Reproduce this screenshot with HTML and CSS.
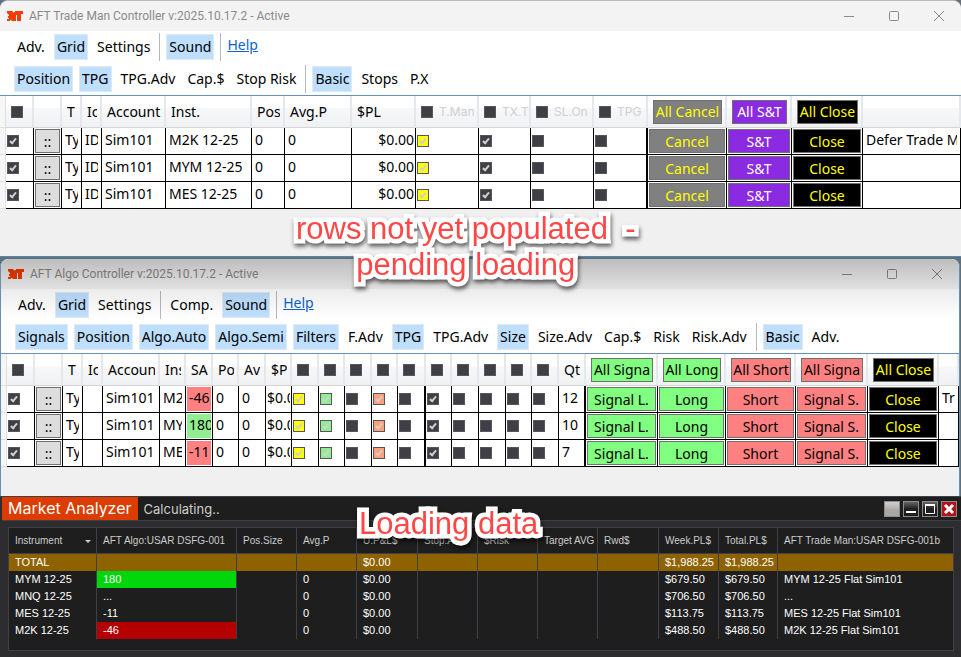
FILE: index.html
```html
<!DOCTYPE html>
<html lang="en">

<head>
    <meta charset="UTF-8">
    <meta name="viewport" content="width=device-width, initial-scale=1.0">
    <title>AFT Controllers</title>

    <link rel="stylesheet" href="styles.css">
</head>

<body>
    <!-- Trade Man -->
    <section class="window trade">
        <header class="titlebar">
            <svg class="logo" viewBox="0 0 16 10"><path d="M0 0H5L7 2V1H8V0H16V3H14V10H10V4H9V10H5L4 9H3V10H0V8H2V7H1V5H2V4L0 2Z" /></svg>
            <h1>AFT Trade Man Controller v:2025.10.17.2 - Active</h1>
            <div class="controls">
                <button aria-label="Minimize"><svg viewBox="0 0 10 10"><path d="M0 5.500H10" /></svg></button>
                <button aria-label="Maximize"><svg viewBox="0 0 10 10"><rect x=".5" y=".5" width="9" height="9" rx="1" /></svg></button>
                <button aria-label="Close window"><svg viewBox="0 0 10 10"><path d="M0 0L10 10M10 0L0 10" /></svg></button>
            </div>
        </header>
        <nav class="toolbar">
            <div class="tools">
                <button>Adv.</button>
                <button class="on">Grid</button>
                <button>Settings</button>
                <i class="sep"></i>
                <button class="on">Sound</button>
                <i class="sep"></i>
                <a href="#">Help</a>
            </div>
            <div class="tools">
                <button class="on">Position</button>
                <button class="on">TPG</button>
                <button>TPG.Adv</button>
                <button>Cap.$</button>
                <button>Stop Risk</button>
                <i class="sep"></i>
                <button class="on">Basic</button>
                <button>Stops</button>
                <button>P.X</button>
            </div>
        </nav>
        <table class="grid">
            <colgroup>
                <col style="width:6px"><col style="width:28px"><col style="width:28px"><col style="width:20px"><col style="width:20px">
                <col style="width:64px"><col style="width:86px"><col style="width:33px"><col style="width:67px"><col style="width:64px">
                <col style="width:63px"><col style="width:52px"><col style="width:63px"><col style="width:54px"><col style="width:79px">
                <col style="width:65px"><col style="width:71px"><col>
            </colgroup>
            <thead>
                <tr>
                    <th class="rowhead"></th>
                    <th><input type="checkbox" aria-label="All rows"></th>
                    <th></th>
                    <th><span>T</span></th>
                    <th><span>Ic</span></th>
                    <th><span>Account</span></th>
                    <th><span>Inst.</span></th>
                    <th><span>Pos</span></th>
                    <th><span>Avg.P</span></th>
                    <th><span>$PL</span></th>
                    <th><label><input type="checkbox">T.Man</label></th>
                    <th><label><input type="checkbox">TX.T</label></th>
                    <th><label><input type="checkbox">SL.On</label></th>
                    <th><label><input type="checkbox">TPG</label></th>
                    <th><button class="gray">All Cancel</button></th>
                    <th><button class="violet">All S&amp;T</button></th>
                    <th><button class="black">All Close</button></th>
                    <th></th>
                </tr>
            </thead>
            <tbody>
                <tr>
                    <td class="rowhead"></td>
                    <td><input type="checkbox" aria-label="Row" checked></td>
                    <td><button>::</button></td>
                    <td><span>Ty</span></td>
                    <td><span>ID</span></td>
                    <td><span>Sim101</span></td>
                    <td><span>M2K 12-25</span></td>
                    <td><span>0</span></td>
                    <td><span>0</span></td>
                    <td class="money"><span>$0.00</span></td>
                    <td><input class="yellow" type="checkbox" aria-label="T.Man" checked></td>
                    <td><input type="checkbox" aria-label="TX.T" checked></td>
                    <td><input type="checkbox" aria-label="SL.On"></td>
                    <td class="end"><input type="checkbox" aria-label="TPG"></td>
                    <td><button class="gray">Cancel</button></td>
                    <td><button class="violet">S&amp;T</button></td>
                    <td><button class="black">Close</button></td>
                    <td><span>Defer Trade Man</span></td>
                </tr>
                <tr>
                    <td class="rowhead"></td>
                    <td><input type="checkbox" aria-label="Row" checked></td>
                    <td><button>::</button></td>
                    <td><span>Ty</span></td>
                    <td><span>ID</span></td>
                    <td><span>Sim101</span></td>
                    <td><span>MYM 12-25</span></td>
                    <td><span>0</span></td>
                    <td><span>0</span></td>
                    <td class="money"><span>$0.00</span></td>
                    <td><input class="yellow" type="checkbox" aria-label="T.Man" checked></td>
                    <td><input type="checkbox" aria-label="TX.T" checked></td>
                    <td><input type="checkbox" aria-label="SL.On"></td>
                    <td class="end"><input type="checkbox" aria-label="TPG"></td>
                    <td><button class="gray">Cancel</button></td>
                    <td><button class="violet">S&amp;T</button></td>
                    <td><button class="black">Close</button></td>
                    <td></td>
                </tr>
                <tr>
                    <td class="rowhead"></td>
                    <td><input type="checkbox" aria-label="Row" checked></td>
                    <td><button>::</button></td>
                    <td><span>Ty</span></td>
                    <td><span>ID</span></td>
                    <td><span>Sim101</span></td>
                    <td><span>MES 12-25</span></td>
                    <td><span>0</span></td>
                    <td><span>0</span></td>
                    <td class="money"><span>$0.00</span></td>
                    <td><input class="yellow" type="checkbox" aria-label="T.Man" checked></td>
                    <td><input type="checkbox" aria-label="TX.T" checked></td>
                    <td><input type="checkbox" aria-label="SL.On"></td>
                    <td class="end"><input type="checkbox" aria-label="TPG"></td>
                    <td><button class="gray">Cancel</button></td>
                    <td><button class="violet">S&amp;T</button></td>
                    <td><button class="black">Close</button></td>
                    <td></td>
                </tr>
            </tbody>
        </table>
        <p class="note note-rows">rows not yet populated  -
pending loading</p>
    </section>

    <!-- Algo -->
    <section class="window algo">
        <header class="titlebar">
            <svg class="logo" viewBox="0 0 16 10"><path d="M0 0H5L7 2V1H8V0H16V3H14V10H10V4H9V10H5L4 9H3V10H0V8H2V7H1V5H2V4L0 2Z" /></svg>
            <h1>AFT Algo Controller v:2025.10.17.2 - Active</h1>
            <div class="controls">
                <button aria-label="Minimize"><svg viewBox="0 0 10 10"><path d="M0 5.500H10" /></svg></button>
                <button aria-label="Maximize"><svg viewBox="0 0 10 10"><rect x=".5" y=".5" width="9" height="9" rx="1" /></svg></button>
                <button aria-label="Close window"><svg viewBox="0 0 10 10"><path d="M0 0L10 10M10 0L0 10" /></svg></button>
            </div>
        </header>
        <nav class="toolbar">
            <div class="tools">
                <button>Adv.</button>
                <button class="on">Grid</button>
                <button>Settings</button>
                <i class="sep"></i>
                <button>Comp.</button>
                <button class="on">Sound</button>
                <i class="sep"></i>
                <a href="#">Help</a>
            </div>
            <div class="tools">
                <button class="on">Signals</button>
                <button class="on">Position</button>
                <button class="on">Algo.Auto</button>
                <button class="on">Algo.Semi</button>
                <button class="on">Filters</button>
                <button>F.Adv</button>
                <button class="on">TPG</button>
                <button>TPG.Adv</button>
                <button class="on">Size</button>
                <button>Size.Adv</button>
                <button>Cap.$</button>
                <button>Risk</button>
                <button>Risk.Adv</button>
                <i class="sep"></i>
                <button class="on">Basic</button>
                <button>Adv.</button>
            </div>
        </nav>
        <table class="grid">
            <colgroup>
                <col style="width:6px"><col style="width:28px"><col style="width:28px"><col style="width:20px"><col style="width:20px">
                <col style="width:57px"><col style="width:26px"><col style="width:27px"><col style="width:26px"><col style="width:27px">
                <col style="width:26px"><col style="width:27px"><col style="width:26px"><col style="width:27px"><col style="width:26px">
                <col style="width:28px"><col style="width:26px"><col style="width:27px"><col style="width:27px"><col style="width:26px">
                <col style="width:27px"><col style="width:27px"><col style="width:72px"><col style="width:68px"><col style="width:70px">
                <col style="width:72px"><col style="width:71px"><col>
            </colgroup>
            <thead>
                <tr>
                    <th class="rowhead"></th>
                    <th><input type="checkbox" aria-label="All rows"></th>
                    <th></th>
                    <th><span>T</span></th>
                    <th><span>Ic</span></th>
                    <th><span>Account</span></th>
                    <th><span>Ins</span></th>
                    <th><span>SA</span></th>
                    <th><span>Po</span></th>
                    <th><span>Av</span></th>
                    <th><span>$P</span></th>
                    <th><input type="checkbox" aria-label="Column 1"></th>
                    <th><input type="checkbox" aria-label="Column 2"></th>
                    <th><input type="checkbox" aria-label="Column 3"></th>
                    <th><input type="checkbox" aria-label="Column 4"></th>
                    <th><input type="checkbox" aria-label="Column 5"></th>
                    <th><input type="checkbox" aria-label="Column 6"></th>
                    <th><input type="checkbox" aria-label="Column 7"></th>
                    <th><input type="checkbox" aria-label="Column 8"></th>
                    <th><input type="checkbox" aria-label="Column 9"></th>
                    <th><input type="checkbox" aria-label="Column 10"></th>
                    <th><span>Qt</span></th>
                    <th><button class="green">All Signa</button></th>
                    <th><button class="green">All Long</button></th>
                    <th><button class="red">All Short</button></th>
                    <th><button class="red">All Signa</button></th>
                    <th><button class="black">All Close</button></th>
                    <th></th>
                </tr>
            </thead>
            <tbody>
                <tr>
                    <td class="rowhead"></td>
                    <td><input type="checkbox" aria-label="Row" checked></td>
                    <td><button>::</button></td>
                    <td><span>Ty</span></td>
                    <td></td>
                    <td><span>Sim101</span></td>
                    <td><span>M2</span></td>
                    <td><span class="signal down">-46</span></td>
                    <td><span>0</span></td>
                    <td><span>0</span></td>
                    <td class="pl"><span>$0.00</span></td>
                    <td><input class="yellow" type="checkbox" aria-label="Column 1" checked></td>
                    <td><input class="lime" type="checkbox" aria-label="Column 2" checked></td>
                    <td><input type="checkbox" aria-label="Column 3"></td>
                    <td><input class="salmon" type="checkbox" aria-label="Column 4" checked></td>
                    <td class="end"><input type="checkbox" aria-label="Column 5"></td>
                    <td><input type="checkbox" aria-label="Column 6" checked></td>
                    <td><input type="checkbox" aria-label="Column 7"></td>
                    <td><input type="checkbox" aria-label="Column 8"></td>
                    <td><input type="checkbox" aria-label="Column 9"></td>
                    <td><input type="checkbox" aria-label="Column 10"></td>
                    <td class="end"><span>12</span></td>
                    <td><button class="green">Signal L.</button></td>
                    <td><button class="green">Long</button></td>
                    <td><button class="red">Short</button></td>
                    <td><button class="red">Signal S.</button></td>
                    <td><button class="black">Close</button></td>
                    <td><span>Tra</span></td>
                </tr>
                <tr>
                    <td class="rowhead"></td>
                    <td><input type="checkbox" aria-label="Row" checked></td>
                    <td><button>::</button></td>
                    <td><span>Ty</span></td>
                    <td></td>
                    <td><span>Sim101</span></td>
                    <td><span>MY</span></td>
                    <td><span class="signal up">180</span></td>
                    <td><span>0</span></td>
                    <td><span>0</span></td>
                    <td class="pl"><span>$0.00</span></td>
                    <td><input class="yellow" type="checkbox" aria-label="Column 1" checked></td>
                    <td><input class="lime" type="checkbox" aria-label="Column 2" checked></td>
                    <td><input type="checkbox" aria-label="Column 3"></td>
                    <td><input class="salmon" type="checkbox" aria-label="Column 4" checked></td>
                    <td class="end"><input type="checkbox" aria-label="Column 5"></td>
                    <td><input type="checkbox" aria-label="Column 6" checked></td>
                    <td><input type="checkbox" aria-label="Column 7"></td>
                    <td><input type="checkbox" aria-label="Column 8"></td>
                    <td><input type="checkbox" aria-label="Column 9"></td>
                    <td><input type="checkbox" aria-label="Column 10"></td>
                    <td class="end"><span>10</span></td>
                    <td><button class="green">Signal L.</button></td>
                    <td><button class="green">Long</button></td>
                    <td><button class="red">Short</button></td>
                    <td><button class="red">Signal S.</button></td>
                    <td><button class="black">Close</button></td>
                    <td></td>
                </tr>
                <tr>
                    <td class="rowhead"></td>
                    <td><input type="checkbox" aria-label="Row" checked></td>
                    <td><button>::</button></td>
                    <td><span>Ty</span></td>
                    <td></td>
                    <td><span>Sim101</span></td>
                    <td><span>ME</span></td>
                    <td><span class="signal down">-11</span></td>
                    <td><span>0</span></td>
                    <td><span>0</span></td>
                    <td class="pl"><span>$0.00</span></td>
                    <td><input class="yellow" type="checkbox" aria-label="Column 1" checked></td>
                    <td><input class="lime" type="checkbox" aria-label="Column 2" checked></td>
                    <td><input type="checkbox" aria-label="Column 3"></td>
                    <td><input class="salmon" type="checkbox" aria-label="Column 4" checked></td>
                    <td class="end"><input type="checkbox" aria-label="Column 5"></td>
                    <td><input type="checkbox" aria-label="Column 6" checked></td>
                    <td><input type="checkbox" aria-label="Column 7"></td>
                    <td><input type="checkbox" aria-label="Column 8"></td>
                    <td><input type="checkbox" aria-label="Column 9"></td>
                    <td><input type="checkbox" aria-label="Column 10"></td>
                    <td class="end"><span>7</span></td>
                    <td><button class="green">Signal L.</button></td>
                    <td><button class="green">Long</button></td>
                    <td><button class="red">Short</button></td>
                    <td><button class="red">Signal S.</button></td>
                    <td><button class="black">Close</button></td>
                    <td></td>
                </tr>
            </tbody>
        </table>
    </section>

    <!-- Market Analyzer -->
    <section class="analyzer">
        <header class="analyzer-bar">
            <h2>Market Analyzer</h2>
            <p>Calculating..</p>
            <div class="analyzer-controls">
                <button class="blank" aria-label="Link"></button>
                <button aria-label="Minimize"><svg viewBox="0 0 14 14"><path d="M2 10H12" /></svg></button>
                <button aria-label="Maximize"><svg viewBox="0 0 14 14"><path d="M2 3H12" /><path class="thin" d="M2.500 3V11.500H11.500V3" /></svg></button>
                <button class="quit" aria-label="Close window"><svg viewBox="0 0 14 14"><path d="M3 3L11 11M11 3L3 11" /></svg></button>
            </div>
        </header>
        <div class="analyzer-body">
            <table class="quotes">
                <colgroup>
                    <col style="width:88px"><col style="width:140px"><col style="width:60px"><col style="width:60px">
                    <col style="width:61px"><col style="width:60px"><col style="width:60px"><col style="width:60px">
                    <col style="width:61px"><col style="width:60px"><col style="width:59px"><col>
                </colgroup>
                <thead>
                    <tr>
                        <th class="sorted">Instrument</th>
                        <th>AFT Algo:USAR DSFG-001</th>
                        <th>Pos.Size</th>
                        <th>Avg.P</th>
                        <th>U.P&amp;L$</th>
                        <th>Stop.Avg</th>
                        <th>$Risk</th>
                        <th>Target AVG</th>
                        <th>Rwd$</th>
                        <th>Week.PL$</th>
                        <th>Total.PL$</th>
                        <th>AFT Trade Man:USAR DSFG-001b</th>
                    </tr>
                </thead>
                <tbody>
                    <tr class="total">
                        <td>TOTAL</td><td></td><td></td><td></td><td>$0.00</td><td></td><td></td><td></td><td></td>
                        <td>$1,988.25</td><td>$1,988.25</td><td></td>
                    </tr>
                    <tr>
                        <td>MYM 12-25</td><td class="gain">180</td><td></td><td>0</td><td>$0.00</td><td></td><td></td><td></td><td></td>
                        <td>$679.50</td><td>$679.50</td><td>MYM 12-25 Flat Sim101</td>
                    </tr>
                    <tr>
                        <td>MNQ 12-25</td><td>...</td><td></td><td>0</td><td>$0.00</td><td></td><td></td><td></td><td></td>
                        <td>$706.50</td><td>$706.50</td><td>...</td>
                    </tr>
                    <tr>
                        <td>MES 12-25</td><td>-11</td><td></td><td>0</td><td>$0.00</td><td></td><td></td><td></td><td></td>
                        <td>$113.75</td><td>$113.75</td><td>MES 12-25 Flat Sim101</td>
                    </tr>
                    <tr>
                        <td>M2K 12-25</td><td class="loss">-46</td><td></td><td>0</td><td>$0.00</td><td></td><td></td><td></td><td></td>
                        <td>$488.50</td><td>$488.50</td><td>M2K 12-25 Flat Sim101</td>
                    </tr>
                </tbody>
            </table>
        </div>
        <p class="note note-data">Loading data</p>
    </section>
</body>

</html>
```

FILE: styles.css
```css
* {
    box-sizing: border-box;
}

body {
    margin: 0;
    min-height: 100vh;
    display: flex;
    flex-direction: column;
    background: #5f727b;
    font-family: "Noto Sans", "Open Sans", sans-serif;
    font-size: 14px;
    line-height: 20px;
    color: #000;
}

h1,
h2,
p {
    margin: 0;
    font-weight: normal;
}

button {
    font: inherit;
    color: inherit;
    white-space: nowrap;
    cursor: pointer;
}

/* windows */
.window {
    position: relative;
    background: #f0f0f0;
    border-radius: 8px 8px 0 0;
}

.trade {
    border-top: 1px solid #b9b9b9;
    border-bottom: 1px solid #5b86b0;
    padding-bottom: 47px;
    margin-bottom: 2px;
    z-index: 1;
}

.algo {
    margin-right: 1px;
    border-left: 1px solid #6a8fb5;
    border-right: 1px solid #6a8fb5;
    padding-bottom: 29px;
}

/* shadow cast by the window above */
.algo::before {
    content: "";
    position: absolute;
    top: 0;
    left: 0;
    right: 0;
    height: 60px;
    border-radius: 8px 8px 0 0;
    background: linear-gradient(rgba(0, 0, 0, .22), rgba(0, 0, 0, .08) 50%, rgba(0, 0, 0, 0));
    pointer-events: none;
}

.titlebar {
    display: flex;
    align-items: center;
    height: 30px;
    padding-left: 7px;
    background: #f3f3f3;
    border-radius: 8px 8px 0 0;
}

.titlebar h1 {
    flex: 1;
    padding-left: 6px;
    font-family: Roboto, "Noto Sans", sans-serif;
    font-size: 12px;
    color: #8a8a8a;
}

.logo {
    width: 16px;
    height: 10px;
    fill: #f43c00;
}

.controls {
    display: flex;
}

.controls button {
    display: flex;
    align-items: center;
    justify-content: center;
    width: 45px;
    height: 28px;
    padding: 0;
    border: 0;
    background: none;
}

.controls svg {
    width: 10px;
    height: 10px;
    overflow: visible;
    fill: none;
    stroke: #8a8a8a;
}

/* toolbar */
.toolbar {
    display: flex;
    flex-direction: column;
    gap: 4px;
    padding: 2px 14px;
    background: #fff;
    border-bottom: 1px solid #6a8fb5;
}

.tools {
    display: flex;
    align-items: center;
    gap: 6px;
    height: 28px;
}

.tools button {
    height: 26px;
    padding: 0 2px;
    border: 1px solid transparent;
    background: none;
    line-height: 24px;
}

.tools .on {
    background: #bedfff;
    border-color: #e2e8ee;
}

.tools .sep {
    width: 1px;
    height: 28px;
    background: #b4b9c0;
}

.tools a {
    align-self: flex-start;
    padding-top: 2px;
    color: #0b63ce;
}

/* grid */
.grid {
    width: 100%;
    table-layout: fixed;
    border-spacing: 0;
    background: #fff;
}

.grid th,
.grid td {
    padding: 0;
    overflow: hidden;
    text-align: left;
    font-weight: normal;
    white-space: nowrap;
}

.grid th {
    height: 32px;
    padding: 0 3px 0 5px;
    background: linear-gradient(#fff 40%, #f7f8fa 40%, #f0f1f3);
    border-right: 2px solid #e4e7eb;
    border-bottom: 1px solid #d5d5d5;
}

.grid td {
    height: 27px;
    border-right: 1px solid #000;
    border-bottom: 1px solid #000;
}

.grid td.end {
    border-right-width: 2px;
}

.grid .rowhead {
    padding: 0;
    background: #f6f6f6;
    border-right: 1px solid #e0e0e0;
    border-bottom-color: #dedede;
}

.grid span {
    display: block;
    overflow: hidden;
}

.grid td span {
    margin: 0 3px;
    padding-bottom: 2px;
}

.grid .money span {
    margin-right: 1px;
    text-align: right;
}

.grid .pl span {
    margin: 0 1px;
}

.grid td .signal {
    height: 24px;
    margin: 1px;
    padding-left: 2px;
    line-height: 22px;
}

.up {
    background: #90ee90;
}

.down {
    background: #ff8080;
}

.grid label {
    display: flex;
    align-items: center;
    gap: 6px;
    font-family: Inter, "Noto Sans", sans-serif;
    font-size: 12px;
    color: #cfd0d4;
}

.grid input {
    appearance: none;
    flex: none;
    position: relative;
    display: block;
    width: 12px;
    height: 12px;
    margin: 0;
    background: #3f3f46;
    border: 1px solid #56565c;
}

.grid td input {
    margin-left: 1px;
}

.grid input:checked::after {
    content: "";
    box-sizing: border-box;
    position: absolute;
    left: 3px;
    top: 1px;
    width: 4px;
    height: 7px;
    border: solid #d0d0d0;
    border-width: 0 2px 2px 0;
    transform: rotate(40deg);
}

.grid .yellow {
    background: #ff0;
}

.grid .lime {
    background: #90ee90;
}

.grid .salmon {
    background: #ffa07a;
}

.grid button {
    display: block;
    width: 100%;
    height: 24px;
    padding: 2px 1px 0;
    overflow: hidden;
    border: 1px solid #707070;
    background: #ddd;
    line-height: 20px;
}

.grid th button {
    padding-top: 1px;
}

.grid td button {
    width: calc(100% - 2px);
    margin: 0 1px;
}

.grid .gray {
    background: #808080;
    color: #ff0;
}

.grid .violet {
    background: #8a2be2;
    color: #fff;
}

.grid .black {
    background: #000;
    color: #ff0;
}

.grid .green {
    background: #80ff80;
}

.grid .red {
    background: #ff8080;
}

/* market analyzer */
.analyzer {
    position: relative;
    flex: 1;
    display: flex;
    flex-direction: column;
    padding-left: 2px;
    background: #2d2d30;
    border-top: 1px solid #3f3f46;
}

.analyzer-bar {
    display: flex;
    align-items: center;
    height: 24px;
    padding-right: 4px;
    background: #1e1e1e;
    border-bottom: 1px solid #3f3f46;
    font-family: Inter, "Noto Sans", sans-serif;
}

.analyzer-bar h2 {
    padding: 0 6px;
    background: #dc3c00;
    color: #fff;
    font-size: 16px;
    line-height: 23px;
}

.analyzer-bar p {
    flex: 1;
    padding-left: 6px;
    color: #ccc;
    font-size: 13px;
}

.analyzer-controls {
    display: flex;
    gap: 3px;
}

.analyzer-controls button {
    width: 16px;
    height: 16px;
    padding: 0;
    border: 1px solid #8c8c8c;
    background: linear-gradient(#666, #1e1e1e 50%);
}

.analyzer-controls .blank {
    background: linear-gradient(#d0d0d0, #aaa6a6 60%);
}

.analyzer-controls .quit {
    background: #b3141c;
}

.analyzer-controls svg {
    display: block;
    width: 14px;
    height: 14px;
    fill: none;
    stroke: #fff;
    stroke-width: 2;
}

.analyzer-controls .quit svg {
    stroke-width: 3;
}

.analyzer-controls .thin {
    stroke-width: 1;
}

.analyzer-body {
    flex: 1;
    margin: 6px 7px 6px 6px;
    padding-bottom: 11px;
    background: #1e1e1e;
    border: 1px solid #3f3f46;
}

.quotes {
    width: 100%;
    table-layout: fixed;
    border-spacing: 0;
    font-family: "Liberation Sans", Arial, sans-serif;
    font-size: 11px;
    color: #fff;
}

.quotes th,
.quotes td {
    overflow: hidden;
    padding: 0 0 0 6px;
    border-right: 1px solid #3f3f46;
    text-align: left;
    white-space: nowrap;
}

.quotes th:last-child,
.quotes td:last-child {
    border-right: 0;
}

.quotes th {
    height: 26px;
    border-bottom: 1px solid #3f3f46;
    color: #ccc;
    font-size: 10px;
    font-weight: normal;
}

.quotes td {
    height: 17px;
    line-height: 17px;
}

.quotes .sorted::after {
    content: "";
    float: right;
    margin: 9px 5px 0 0;
    border: 3px solid transparent;
    border-top-color: #ccc;
}

.total {
    background: #8f6200;
}

.quotes .gain {
    background: #00d60c;
}

.quotes .loss {
    background: #b40000;
}

/* callouts */
.note {
    position: absolute;
    z-index: 2;
    font-family: "Liberation Sans", Arial, sans-serif;
    font-size: 31px;
    line-height: 36px;
    text-align: center;
    white-space: pre;
    color: #ff4747;
    -webkit-text-stroke: 9px #fff;
    stroke-linejoin: round;
    paint-order: stroke fill;
    filter: drop-shadow(1px 3px 2px rgba(0, 0, 0, .6));
}

.note-rows {
    left: 296px;
    top: 210px;
}

.note-data {
    left: 359px;
    top: 9px;
}
```
